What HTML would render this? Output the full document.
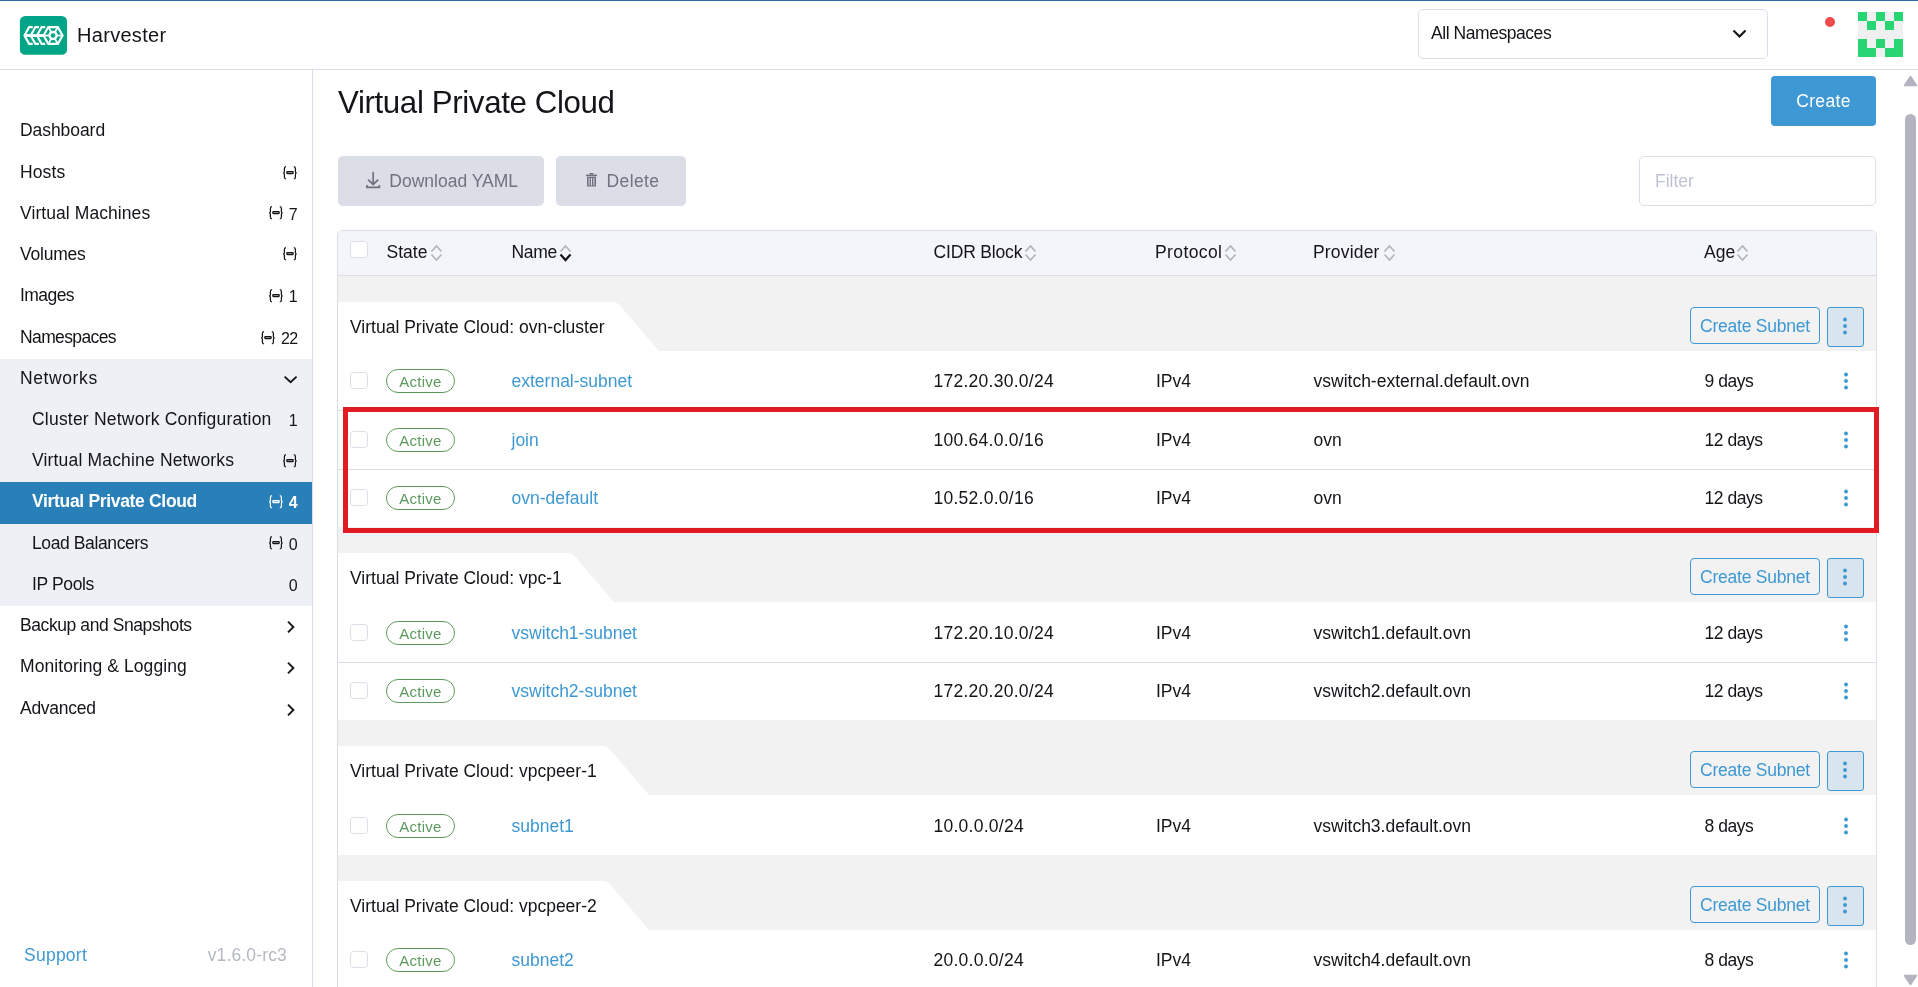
<!DOCTYPE html>
<html><head><meta charset="utf-8"><title>Harvester - Virtual Private Cloud</title>
<style>
html,body{margin:0;padding:0;width:1918px;height:987px;overflow:hidden;background:#fff;font-family:"Liberation Sans", sans-serif;}
.t{position:absolute;white-space:nowrap;line-height:1;}
#root{position:absolute;left:0;top:0;width:1918px;height:987px;will-change:transform;}
</style></head><body><div id="root">
<div style="position:absolute;left:0px;top:0px;width:1918px;height:1px;background:#336aa8"></div>
<div style="position:absolute;left:0px;top:69px;width:1918px;height:1px;background:#dcdee7"></div>
<svg style="position:absolute;left:18px;top:14px" width="52" height="44" viewBox="0 0 1166 987">
<rect x="42" y="45" width="1058" height="870" rx="120" fill="#00a587"/>
<g fill="none" stroke="#fff" stroke-linejoin="miter">
<polyline points="330,293 250,293 145,483 250,670 330,670" stroke-width="48"/>
<polyline points="470,293 390,293 285,483 390,670 470,670" stroke-width="48"/>
<polyline points="610,293 530,293 425,483 530,670 610,670" stroke-width="48"/>
<line x1="145" y1="483" x2="600" y2="483" stroke-width="64"/>
<polygon points="680,293 893,293 1000,483 893,670 680,670 573,483" stroke-width="48"/>
<line x1="680" y1="293" x2="893" y2="670" stroke-width="40"/>
<line x1="893" y1="293" x2="680" y2="670" stroke-width="40"/>
<line x1="573" y1="483" x2="1000" y2="483" stroke-width="40"/>
</g>
<circle cx="786" cy="483" r="106" fill="#fff"/>
<circle cx="786" cy="483" r="52" fill="#00a587"/>
</svg>
<div class="t" style="left:77px;top:25.00px;font-size:20px;color:#141419;font-weight:400;letter-spacing:0.3px;">Harvester</div>
<div style="position:absolute;left:1418px;top:9px;width:350px;height:50px;border:1px solid #dcdee7;border-radius:5px;box-sizing:border-box;background:#fff"></div>
<div class="t" style="left:1431px;top:25.20px;font-size:17.5px;color:#141419;font-weight:400;letter-spacing:-0.446px;">All Namespaces</div>
<svg style="position:absolute;left:1731px;top:28px" width="17" height="12" viewBox="0 0 17 12"><polyline points="2.5,2.5 8.5,8.5 14.5,2.5" fill="none" stroke="#141419" stroke-width="2.2"/></svg>
<div style="position:absolute;left:1825px;top:17px;width:10px;height:10px;border-radius:50%;background:#f04a4a"></div>
<svg style="position:absolute;left:1858px;top:12px" width="45" height="45" viewBox="0 0 45 45" shape-rendering="crispEdges"><rect x="0" y="0" width="9" height="9" fill="#27d673"/><rect x="9" y="0" width="9" height="9" fill="#f0f0f0"/><rect x="18" y="0" width="9" height="9" fill="#27d673"/><rect x="27" y="0" width="9" height="9" fill="#f0f0f0"/><rect x="36" y="0" width="9" height="9" fill="#27d673"/><rect x="0" y="9" width="9" height="9" fill="#f0f0f0"/><rect x="9" y="9" width="9" height="9" fill="#27d673"/><rect x="18" y="9" width="9" height="9" fill="#f0f0f0"/><rect x="27" y="9" width="9" height="9" fill="#27d673"/><rect x="36" y="9" width="9" height="9" fill="#f0f0f0"/><rect x="0" y="18" width="9" height="9" fill="#f0f0f0"/><rect x="9" y="18" width="9" height="9" fill="#f0f0f0"/><rect x="18" y="18" width="9" height="9" fill="#f0f0f0"/><rect x="27" y="18" width="9" height="9" fill="#f0f0f0"/><rect x="36" y="18" width="9" height="9" fill="#f0f0f0"/><rect x="0" y="27" width="9" height="9" fill="#27d673"/><rect x="9" y="27" width="9" height="9" fill="#f0f0f0"/><rect x="18" y="27" width="9" height="9" fill="#27d673"/><rect x="27" y="27" width="9" height="9" fill="#f0f0f0"/><rect x="36" y="27" width="9" height="9" fill="#27d673"/><rect x="0" y="36" width="9" height="9" fill="#27d673"/><rect x="9" y="36" width="9" height="9" fill="#27d673"/><rect x="18" y="36" width="9" height="9" fill="#f0f0f0"/><rect x="27" y="36" width="9" height="9" fill="#27d673"/><rect x="36" y="36" width="9" height="9" fill="#27d673"/></svg>
<div style="position:absolute;left:312px;top:70px;width:1px;height:917px;background:#dcdee7"></div>
<div style="position:absolute;left:0px;top:359px;width:312px;height:247px;background:#eef0f5"></div>
<div style="position:absolute;left:0px;top:482px;width:312px;height:42px;background:#2980b9"></div>
<div class="t" style="left:20px;top:122.00px;font-size:17.5px;color:#141419;font-weight:400;letter-spacing:-0.062px">Dashboard</div>
<div class="t" style="left:20px;top:164.00px;font-size:17.5px;color:#141419;font-weight:400;letter-spacing:0.125px">Hosts</div>
<svg width="15" height="14" viewBox="0 0 15 14" style="position:absolute;left:283.10px;top:165.70px"><path d="M3.0,0.7 C1.8,0.9 1.4,1.6 1.4,2.4 L1.4,5.4 C1.4,6.3 0.9,6.9 0.1,6.9 C0.9,6.9 1.4,7.5 1.4,8.4 L1.4,11.3 C1.4,12.1 1.8,12.8 3.0,13.0 M10.8,0.7 C12.0,0.9 12.4,1.6 12.4,2.4 L12.4,5.4 C12.4,6.3 12.9,6.9 13.7,6.9 C12.9,6.9 12.4,7.5 12.4,8.4 L12.4,11.3 C12.4,12.1 12.0,12.8 10.8,13.0" fill="none" stroke="#141419" stroke-width="1.25"/><rect x="3.85" y="5.75" width="6.3" height="1.8" rx="0.5" fill="none" stroke="#141419" stroke-width="1.3"/></svg>
<div class="t" style="left:20px;top:204.50px;font-size:17.5px;color:#141419;font-weight:400;letter-spacing:0.073px">Virtual Machines</div>
<div class="t" style="right:1620.4px;top:206.50px;font-size:16px;color:#141419;font-weight:400;">7</div>
<svg width="15" height="14" viewBox="0 0 15 14" style="position:absolute;left:269.00px;top:206.20px"><path d="M3.0,0.7 C1.8,0.9 1.4,1.6 1.4,2.4 L1.4,5.4 C1.4,6.3 0.9,6.9 0.1,6.9 C0.9,6.9 1.4,7.5 1.4,8.4 L1.4,11.3 C1.4,12.1 1.8,12.8 3.0,13.0 M10.8,0.7 C12.0,0.9 12.4,1.6 12.4,2.4 L12.4,5.4 C12.4,6.3 12.9,6.9 13.7,6.9 C12.9,6.9 12.4,7.5 12.4,8.4 L12.4,11.3 C12.4,12.1 12.0,12.8 10.8,13.0" fill="none" stroke="#141419" stroke-width="1.25"/><rect x="3.85" y="5.75" width="6.3" height="1.8" rx="0.5" fill="none" stroke="#141419" stroke-width="1.3"/></svg>
<div class="t" style="left:20px;top:245.75px;font-size:17.5px;color:#141419;font-weight:400;letter-spacing:-0.233px">Volumes</div>
<svg width="15" height="14" viewBox="0 0 15 14" style="position:absolute;left:283.10px;top:247.45px"><path d="M3.0,0.7 C1.8,0.9 1.4,1.6 1.4,2.4 L1.4,5.4 C1.4,6.3 0.9,6.9 0.1,6.9 C0.9,6.9 1.4,7.5 1.4,8.4 L1.4,11.3 C1.4,12.1 1.8,12.8 3.0,13.0 M10.8,0.7 C12.0,0.9 12.4,1.6 12.4,2.4 L12.4,5.4 C12.4,6.3 12.9,6.9 13.7,6.9 C12.9,6.9 12.4,7.5 12.4,8.4 L12.4,11.3 C12.4,12.1 12.0,12.8 10.8,13.0" fill="none" stroke="#141419" stroke-width="1.25"/><rect x="3.85" y="5.75" width="6.3" height="1.8" rx="0.5" fill="none" stroke="#141419" stroke-width="1.3"/></svg>
<div class="t" style="left:20px;top:287.00px;font-size:17.5px;color:#141419;font-weight:400;letter-spacing:-0.56px">Images</div>
<div class="t" style="right:1620.4px;top:289.00px;font-size:16px;color:#141419;font-weight:400;">1</div>
<svg width="15" height="14" viewBox="0 0 15 14" style="position:absolute;left:269.00px;top:288.70px"><path d="M3.0,0.7 C1.8,0.9 1.4,1.6 1.4,2.4 L1.4,5.4 C1.4,6.3 0.9,6.9 0.1,6.9 C0.9,6.9 1.4,7.5 1.4,8.4 L1.4,11.3 C1.4,12.1 1.8,12.8 3.0,13.0 M10.8,0.7 C12.0,0.9 12.4,1.6 12.4,2.4 L12.4,5.4 C12.4,6.3 12.9,6.9 13.7,6.9 C12.9,6.9 12.4,7.5 12.4,8.4 L12.4,11.3 C12.4,12.1 12.0,12.8 10.8,13.0" fill="none" stroke="#141419" stroke-width="1.25"/><rect x="3.85" y="5.75" width="6.3" height="1.8" rx="0.5" fill="none" stroke="#141419" stroke-width="1.3"/></svg>
<div class="t" style="left:20px;top:329.00px;font-size:17.5px;color:#141419;font-weight:400;letter-spacing:-0.622px">Namespaces</div>
<div class="t" style="right:1620.4px;top:331.00px;font-size:16px;color:#141419;font-weight:400;letter-spacing:-0.6px;">22</div>
<svg width="15" height="14" viewBox="0 0 15 14" style="position:absolute;left:260.80px;top:330.70px"><path d="M3.0,0.7 C1.8,0.9 1.4,1.6 1.4,2.4 L1.4,5.4 C1.4,6.3 0.9,6.9 0.1,6.9 C0.9,6.9 1.4,7.5 1.4,8.4 L1.4,11.3 C1.4,12.1 1.8,12.8 3.0,13.0 M10.8,0.7 C12.0,0.9 12.4,1.6 12.4,2.4 L12.4,5.4 C12.4,6.3 12.9,6.9 13.7,6.9 C12.9,6.9 12.4,7.5 12.4,8.4 L12.4,11.3 C12.4,12.1 12.0,12.8 10.8,13.0" fill="none" stroke="#141419" stroke-width="1.25"/><rect x="3.85" y="5.75" width="6.3" height="1.8" rx="0.5" fill="none" stroke="#141419" stroke-width="1.3"/></svg>
<div class="t" style="left:20px;top:369.50px;font-size:17.5px;color:#141419;font-weight:400;letter-spacing:0.6px">Networks</div>
<svg style="position:absolute;left:282px;top:370.5px" width="17" height="14" viewBox="0 0 17 14"><polyline points="2.6,5.6 8.6,11.1 14.6,5.6" fill="none" stroke="#141419" stroke-width="1.9"/></svg>
<div class="t" style="left:32px;top:410.75px;font-size:17.5px;color:#141419;font-weight:400;letter-spacing:0.211px">Cluster Network Configuration</div>
<div class="t" style="right:1620.4px;top:412.75px;font-size:16px;color:#141419;font-weight:400;">1</div>
<div class="t" style="left:32px;top:452.00px;font-size:17.5px;color:#141419;font-weight:400;letter-spacing:0.17px">Virtual Machine Networks</div>
<svg width="15" height="14" viewBox="0 0 15 14" style="position:absolute;left:283.10px;top:453.70px"><path d="M3.0,0.7 C1.8,0.9 1.4,1.6 1.4,2.4 L1.4,5.4 C1.4,6.3 0.9,6.9 0.1,6.9 C0.9,6.9 1.4,7.5 1.4,8.4 L1.4,11.3 C1.4,12.1 1.8,12.8 3.0,13.0 M10.8,0.7 C12.0,0.9 12.4,1.6 12.4,2.4 L12.4,5.4 C12.4,6.3 12.9,6.9 13.7,6.9 C12.9,6.9 12.4,7.5 12.4,8.4 L12.4,11.3 C12.4,12.1 12.0,12.8 10.8,13.0" fill="none" stroke="#141419" stroke-width="1.25"/><rect x="3.85" y="5.75" width="6.3" height="1.8" rx="0.5" fill="none" stroke="#141419" stroke-width="1.3"/></svg>
<div class="t" style="left:32px;top:493.25px;font-size:17.5px;color:#fff;font-weight:700;letter-spacing:-0.325px">Virtual Private Cloud</div>
<div class="t" style="right:1620.4px;top:495.25px;font-size:16px;color:#fff;font-weight:700;">4</div>
<svg width="15" height="14" viewBox="0 0 15 14" style="position:absolute;left:269.00px;top:494.95px"><path d="M3.0,0.7 C1.8,0.9 1.4,1.6 1.4,2.4 L1.4,5.4 C1.4,6.3 0.9,6.9 0.1,6.9 C0.9,6.9 1.4,7.5 1.4,8.4 L1.4,11.3 C1.4,12.1 1.8,12.8 3.0,13.0 M10.8,0.7 C12.0,0.9 12.4,1.6 12.4,2.4 L12.4,5.4 C12.4,6.3 12.9,6.9 13.7,6.9 C12.9,6.9 12.4,7.5 12.4,8.4 L12.4,11.3 C12.4,12.1 12.0,12.8 10.8,13.0" fill="none" stroke="#fff" stroke-width="1.25"/><rect x="3.85" y="5.75" width="6.3" height="1.8" rx="0.5" fill="none" stroke="#fff" stroke-width="1.3"/></svg>
<div class="t" style="left:32px;top:534.50px;font-size:17.5px;color:#141419;font-weight:400;letter-spacing:-0.392px">Load Balancers</div>
<div class="t" style="right:1620.4px;top:536.50px;font-size:16px;color:#141419;font-weight:400;">0</div>
<svg width="15" height="14" viewBox="0 0 15 14" style="position:absolute;left:269.00px;top:536.20px"><path d="M3.0,0.7 C1.8,0.9 1.4,1.6 1.4,2.4 L1.4,5.4 C1.4,6.3 0.9,6.9 0.1,6.9 C0.9,6.9 1.4,7.5 1.4,8.4 L1.4,11.3 C1.4,12.1 1.8,12.8 3.0,13.0 M10.8,0.7 C12.0,0.9 12.4,1.6 12.4,2.4 L12.4,5.4 C12.4,6.3 12.9,6.9 13.7,6.9 C12.9,6.9 12.4,7.5 12.4,8.4 L12.4,11.3 C12.4,12.1 12.0,12.8 10.8,13.0" fill="none" stroke="#141419" stroke-width="1.25"/><rect x="3.85" y="5.75" width="6.3" height="1.8" rx="0.5" fill="none" stroke="#141419" stroke-width="1.3"/></svg>
<div class="t" style="left:32px;top:575.75px;font-size:17.5px;color:#141419;font-weight:400;letter-spacing:-0.371px">IP Pools</div>
<div class="t" style="right:1620.4px;top:577.75px;font-size:16px;color:#141419;font-weight:400;">0</div>
<div class="t" style="left:20px;top:617.00px;font-size:17.5px;color:#141419;font-weight:400;letter-spacing:-0.416px">Backup and Snapshots</div>
<svg style="position:absolute;left:284px;top:618.0px" width="12" height="17" viewBox="0 0 12 17"><polyline points="4,3.6 9.4,9 4,14.4" fill="none" stroke="#141419" stroke-width="1.9"/></svg>
<div class="t" style="left:20px;top:658.25px;font-size:17.5px;color:#141419;font-weight:400;letter-spacing:0.068px">Monitoring &amp; Logging</div>
<svg style="position:absolute;left:284px;top:659.2px" width="12" height="17" viewBox="0 0 12 17"><polyline points="4,3.6 9.4,9 4,14.4" fill="none" stroke="#141419" stroke-width="1.9"/></svg>
<div class="t" style="left:20px;top:699.50px;font-size:17.5px;color:#141419;font-weight:400;letter-spacing:-0.271px">Advanced</div>
<svg style="position:absolute;left:284px;top:700.5px" width="12" height="17" viewBox="0 0 12 17"><polyline points="4,3.6 9.4,9 4,14.4" fill="none" stroke="#141419" stroke-width="1.9"/></svg>
<div class="t" style="left:24px;top:946.60px;font-size:17.5px;color:#3d98d3;font-weight:400;letter-spacing:0.25px;">Support</div>
<div class="t" style="right:1631px;top:946.60px;font-size:17.5px;color:#b6b8c3;font-weight:400;letter-spacing:0.156px;">v1.6.0-rc3</div>
<div class="t" style="left:338px;top:87.00px;font-size:31.25px;color:#141419;font-weight:400;letter-spacing:-0.365px;">Virtual Private Cloud</div>
<div style="position:absolute;left:1771px;top:76px;width:105px;height:50px;background:#3d98d3;border-radius:4px"></div>
<div class="t" style="left:1823.5px;transform:translateX(-50%);top:93.00px;font-size:17.5px;color:#fff;font-weight:400;letter-spacing:0.34px;">Create</div>
<div style="position:absolute;left:338px;top:156px;width:206px;height:50px;background:#dcdee7;border-radius:5px"></div>
<svg style="position:absolute;left:355px;top:165px" width="40" height="30" viewBox="0 0 1316 987"><g fill="none" stroke="#6e717c" stroke-width="56"><line x1="598" y1="225" x2="598" y2="625"/><polyline points="430,480 598,640 765,480" stroke-linejoin="miter"/><polyline points="393,660 393,737 803,737 803,660" stroke-linejoin="round"/></g></svg>
<div class="t" style="left:389.3px;top:173.10px;font-size:17.5px;color:#70737e;font-weight:400;">Download YAML</div>
<div style="position:absolute;left:556px;top:156px;width:130px;height:50px;background:#dcdee7;border-radius:5px"></div>
<svg style="position:absolute;left:585px;top:173px" width="13" height="14" viewBox="0 0 13 14"><g fill="#70737e"><rect x="1" y="1.6" width="11" height="1.6"/><rect x="4.5" y="0" width="4" height="1.6"/><path d="M2,3.8 H11 V13.4 H2 Z M3.6,5 V12.4 H4.6 V5 Z M6,5 V12.4 H7 V5 Z M8.4,5 V12.4 H9.4 V5 Z" fill-rule="evenodd"/></g></svg>
<div class="t" style="left:606.5px;top:173.10px;font-size:17.5px;color:#70737e;font-weight:400;letter-spacing:0.4px;">Delete</div>
<div style="position:absolute;left:1639px;top:156px;width:237px;height:50px;border:1px solid #dcdee7;border-radius:5px;box-sizing:border-box"></div>
<div class="t" style="left:1655px;top:173.30px;font-size:17.5px;color:#bec2d4;font-weight:400;">Filter</div>
<div style="position:absolute;left:337px;top:230px;width:1540px;height:800px;border:1px solid #dcdee7;border-radius:6px 6px 0 0;box-sizing:border-box"></div>
<div style="position:absolute;left:338px;top:231px;width:1538px;height:44px;background:#f4f5fa;border-radius:5px 5px 0 0"></div>
<div style="position:absolute;left:338px;top:275px;width:1538px;height:1px;background:#dcdee7"></div>
<div style="position:absolute;left:350.0px;top:241.25px;width:17.5px;height:16.5px;border:1.25px solid #dcdee7;border-radius:3.5px;box-sizing:border-box;background:#fff"></div>
<div class="t" style="left:386.5px;top:244.00px;font-size:17.5px;color:#141419;font-weight:400;">State</div>
<svg style="position:absolute;left:430px;top:244px" width="13" height="18" viewBox="0 0 13 18"><polyline points="1.5,7.5 6.5,2 11.5,7.5" fill="none" stroke="#b0b3bc" stroke-width="1.6"/><polyline points="1.5,10.5 6.5,16 11.5,10.5" fill="none" stroke="#b0b3bc" stroke-width="1.6"/></svg>
<div class="t" style="left:511.5px;top:244.00px;font-size:17.5px;color:#141419;font-weight:400;letter-spacing:-0.3px;">Name</div>
<svg style="position:absolute;left:559px;top:244px" width="13" height="18" viewBox="0 0 13 18"><polyline points="1.5,7.5 6.5,2 11.5,7.5" fill="none" stroke="#b0b3bc" stroke-width="1.6"/><polyline points="1.5,10.5 6.5,16 11.5,10.5" fill="none" stroke="#141419" stroke-width="2.2"/></svg>
<div class="t" style="left:933.5px;top:244.00px;font-size:17.5px;color:#141419;font-weight:400;letter-spacing:-0.167px;">CIDR Block</div>
<svg style="position:absolute;left:1024px;top:244px" width="13" height="18" viewBox="0 0 13 18"><polyline points="1.5,7.5 6.5,2 11.5,7.5" fill="none" stroke="#b0b3bc" stroke-width="1.6"/><polyline points="1.5,10.5 6.5,16 11.5,10.5" fill="none" stroke="#b0b3bc" stroke-width="1.6"/></svg>
<div class="t" style="left:1155px;top:244.00px;font-size:17.5px;color:#141419;font-weight:400;letter-spacing:0.386px;">Protocol</div>
<svg style="position:absolute;left:1224px;top:244px" width="13" height="18" viewBox="0 0 13 18"><polyline points="1.5,7.5 6.5,2 11.5,7.5" fill="none" stroke="#b0b3bc" stroke-width="1.6"/><polyline points="1.5,10.5 6.5,16 11.5,10.5" fill="none" stroke="#b0b3bc" stroke-width="1.6"/></svg>
<div class="t" style="left:1313px;top:244.00px;font-size:17.5px;color:#141419;font-weight:400;letter-spacing:0.171px;">Provider</div>
<svg style="position:absolute;left:1383px;top:244px" width="13" height="18" viewBox="0 0 13 18"><polyline points="1.5,7.5 6.5,2 11.5,7.5" fill="none" stroke="#b0b3bc" stroke-width="1.6"/><polyline points="1.5,10.5 6.5,16 11.5,10.5" fill="none" stroke="#b0b3bc" stroke-width="1.6"/></svg>
<div class="t" style="left:1704px;top:244.00px;font-size:17.5px;color:#141419;font-weight:400;">Age</div>
<svg style="position:absolute;left:1736px;top:244px" width="13" height="18" viewBox="0 0 13 18"><polyline points="1.5,7.5 6.5,2 11.5,7.5" fill="none" stroke="#b0b3bc" stroke-width="1.6"/><polyline points="1.5,10.5 6.5,16 11.5,10.5" fill="none" stroke="#b0b3bc" stroke-width="1.6"/></svg>
<div style="position:absolute;left:338px;top:276px;width:1538px;height:75px;background:#f2f2f2"></div>
<svg style="position:absolute;left:338px;top:302px" width="321" height="49" viewBox="0 0 321 49"><path d="M0,2 Q0,0 2,0 L276,0 Q279,0 282,3.5 L321,49 L0,49 Z" fill="#fff"/></svg>
<div class="t" style="left:350px;top:319.00px;font-size:17.5px;color:#141419;font-weight:400;">Virtual Private Cloud: ovn-cluster</div>
<div style="position:absolute;left:1690px;top:307.25px;width:130px;height:37px;border:1.25px solid #3d98d3;border-radius:4px;box-sizing:border-box"></div>
<div class="t" style="left:1755px;transform:translateX(-50%);top:317.80px;font-size:17.5px;color:#3d98d3;font-weight:400;letter-spacing:-0.217px;">Create Subnet</div>
<div style="position:absolute;left:1827px;top:307.25px;width:37px;height:39.5px;border:1.25px solid #3d98d3;border-radius:3px;box-sizing:border-box;background:#d8e5ef"></div>
<svg style="position:absolute;left:1841.40px;top:316.00px" width="8" height="20" viewBox="0 0 8 20"><g fill="#3d98d3"><circle cx="4" cy="3.5" r="1.95"/><circle cx="4" cy="10" r="1.95"/><circle cx="4" cy="16.5" r="1.95"/></g></svg>
<div style="position:absolute;left:350.0px;top:372.25px;width:17.5px;height:16.5px;border:1.25px solid #dcdee7;border-radius:3.5px;box-sizing:border-box;background:#fff"></div>
<div style="position:absolute;left:386px;top:368.50px;width:69px;height:24px;border:1.25px solid #5d995d;border-radius:12px;box-sizing:border-box"></div>
<div class="t" style="left:420.5px;transform:translateX(-50%);top:374.10px;font-size:15px;color:#5d995d;font-weight:400;letter-spacing:0.26px;">Active</div>
<div class="t" style="left:511.5px;top:373.00px;font-size:17.5px;color:#3d98d3;font-weight:400;">external-subnet</div>
<div class="t" style="left:933.5px;top:373.00px;font-size:17.5px;color:#141419;font-weight:400;letter-spacing:0.26px;">172.20.30.0/24</div>
<div class="t" style="left:1156px;top:373.00px;font-size:17.5px;color:#141419;font-weight:400;">IPv4</div>
<div class="t" style="left:1313.5px;top:373.00px;font-size:17.5px;color:#141419;font-weight:400;">vswitch-external.default.ovn</div>
<div class="t" style="left:1704.5px;top:373.00px;font-size:17.5px;color:#141419;font-weight:400;letter-spacing:-0.45px;">9 days</div>
<svg style="position:absolute;left:1842.30px;top:370.90px" width="8" height="20" viewBox="0 0 8 20"><g fill="#3d98d3"><circle cx="4" cy="3.5" r="1.95"/><circle cx="4" cy="10" r="1.95"/><circle cx="4" cy="16.5" r="1.95"/></g></svg>
<div style="position:absolute;left:338px;top:410px;width:1538px;height:1px;background:#dcdee7"></div>
<div style="position:absolute;left:350.0px;top:431.25px;width:17.5px;height:16.5px;border:1.25px solid #dcdee7;border-radius:3.5px;box-sizing:border-box;background:#fff"></div>
<div style="position:absolute;left:386px;top:427.50px;width:69px;height:24px;border:1.25px solid #5d995d;border-radius:12px;box-sizing:border-box"></div>
<div class="t" style="left:420.5px;transform:translateX(-50%);top:433.10px;font-size:15px;color:#5d995d;font-weight:400;letter-spacing:0.26px;">Active</div>
<div class="t" style="left:511.5px;top:432.00px;font-size:17.5px;color:#3d98d3;font-weight:400;">join</div>
<div class="t" style="left:933.5px;top:432.00px;font-size:17.5px;color:#141419;font-weight:400;letter-spacing:0.26px;">100.64.0.0/16</div>
<div class="t" style="left:1156px;top:432.00px;font-size:17.5px;color:#141419;font-weight:400;">IPv4</div>
<div class="t" style="left:1313.5px;top:432.00px;font-size:17.5px;color:#141419;font-weight:400;">ovn</div>
<div class="t" style="left:1704.5px;top:432.00px;font-size:17.5px;color:#141419;font-weight:400;letter-spacing:-0.45px;">12 days</div>
<svg style="position:absolute;left:1842.30px;top:429.90px" width="8" height="20" viewBox="0 0 8 20"><g fill="#3d98d3"><circle cx="4" cy="3.5" r="1.95"/><circle cx="4" cy="10" r="1.95"/><circle cx="4" cy="16.5" r="1.95"/></g></svg>
<div style="position:absolute;left:338px;top:469px;width:1538px;height:1px;background:#dcdee7"></div>
<div style="position:absolute;left:350.0px;top:489.25px;width:17.5px;height:16.5px;border:1.25px solid #dcdee7;border-radius:3.5px;box-sizing:border-box;background:#fff"></div>
<div style="position:absolute;left:386px;top:485.50px;width:69px;height:24px;border:1.25px solid #5d995d;border-radius:12px;box-sizing:border-box"></div>
<div class="t" style="left:420.5px;transform:translateX(-50%);top:491.10px;font-size:15px;color:#5d995d;font-weight:400;letter-spacing:0.26px;">Active</div>
<div class="t" style="left:511.5px;top:490.00px;font-size:17.5px;color:#3d98d3;font-weight:400;">ovn-default</div>
<div class="t" style="left:933.5px;top:490.00px;font-size:17.5px;color:#141419;font-weight:400;letter-spacing:0.26px;">10.52.0.0/16</div>
<div class="t" style="left:1156px;top:490.00px;font-size:17.5px;color:#141419;font-weight:400;">IPv4</div>
<div class="t" style="left:1313.5px;top:490.00px;font-size:17.5px;color:#141419;font-weight:400;">ovn</div>
<div class="t" style="left:1704.5px;top:490.00px;font-size:17.5px;color:#141419;font-weight:400;letter-spacing:-0.45px;">12 days</div>
<svg style="position:absolute;left:1842.30px;top:487.90px" width="8" height="20" viewBox="0 0 8 20"><g fill="#3d98d3"><circle cx="4" cy="3.5" r="1.95"/><circle cx="4" cy="10" r="1.95"/><circle cx="4" cy="16.5" r="1.95"/></g></svg>
<div style="position:absolute;left:338px;top:527px;width:1538px;height:75px;background:#f2f2f2"></div>
<svg style="position:absolute;left:338px;top:553px" width="276" height="49" viewBox="0 0 276 49"><path d="M0,2 Q0,0 2,0 L231,0 Q234,0 237,3.5 L276,49 L0,49 Z" fill="#fff"/></svg>
<div class="t" style="left:350px;top:570.00px;font-size:17.5px;color:#141419;font-weight:400;">Virtual Private Cloud: vpc-1</div>
<div style="position:absolute;left:1690px;top:558.25px;width:130px;height:37px;border:1.25px solid #3d98d3;border-radius:4px;box-sizing:border-box"></div>
<div class="t" style="left:1755px;transform:translateX(-50%);top:568.80px;font-size:17.5px;color:#3d98d3;font-weight:400;letter-spacing:-0.217px;">Create Subnet</div>
<div style="position:absolute;left:1827px;top:558.25px;width:37px;height:39.5px;border:1.25px solid #3d98d3;border-radius:3px;box-sizing:border-box;background:#d8e5ef"></div>
<svg style="position:absolute;left:1841.40px;top:567.00px" width="8" height="20" viewBox="0 0 8 20"><g fill="#3d98d3"><circle cx="4" cy="3.5" r="1.95"/><circle cx="4" cy="10" r="1.95"/><circle cx="4" cy="16.5" r="1.95"/></g></svg>
<div style="position:absolute;left:350.0px;top:624.25px;width:17.5px;height:16.5px;border:1.25px solid #dcdee7;border-radius:3.5px;box-sizing:border-box;background:#fff"></div>
<div style="position:absolute;left:386px;top:620.50px;width:69px;height:24px;border:1.25px solid #5d995d;border-radius:12px;box-sizing:border-box"></div>
<div class="t" style="left:420.5px;transform:translateX(-50%);top:626.10px;font-size:15px;color:#5d995d;font-weight:400;letter-spacing:0.26px;">Active</div>
<div class="t" style="left:511.5px;top:625.00px;font-size:17.5px;color:#3d98d3;font-weight:400;">vswitch1-subnet</div>
<div class="t" style="left:933.5px;top:625.00px;font-size:17.5px;color:#141419;font-weight:400;letter-spacing:0.26px;">172.20.10.0/24</div>
<div class="t" style="left:1156px;top:625.00px;font-size:17.5px;color:#141419;font-weight:400;">IPv4</div>
<div class="t" style="left:1313.5px;top:625.00px;font-size:17.5px;color:#141419;font-weight:400;">vswitch1.default.ovn</div>
<div class="t" style="left:1704.5px;top:625.00px;font-size:17.5px;color:#141419;font-weight:400;letter-spacing:-0.45px;">12 days</div>
<svg style="position:absolute;left:1842.30px;top:622.90px" width="8" height="20" viewBox="0 0 8 20"><g fill="#3d98d3"><circle cx="4" cy="3.5" r="1.95"/><circle cx="4" cy="10" r="1.95"/><circle cx="4" cy="16.5" r="1.95"/></g></svg>
<div style="position:absolute;left:338px;top:662px;width:1538px;height:1px;background:#dcdee7"></div>
<div style="position:absolute;left:350.0px;top:682.25px;width:17.5px;height:16.5px;border:1.25px solid #dcdee7;border-radius:3.5px;box-sizing:border-box;background:#fff"></div>
<div style="position:absolute;left:386px;top:678.50px;width:69px;height:24px;border:1.25px solid #5d995d;border-radius:12px;box-sizing:border-box"></div>
<div class="t" style="left:420.5px;transform:translateX(-50%);top:684.10px;font-size:15px;color:#5d995d;font-weight:400;letter-spacing:0.26px;">Active</div>
<div class="t" style="left:511.5px;top:683.00px;font-size:17.5px;color:#3d98d3;font-weight:400;">vswitch2-subnet</div>
<div class="t" style="left:933.5px;top:683.00px;font-size:17.5px;color:#141419;font-weight:400;letter-spacing:0.26px;">172.20.20.0/24</div>
<div class="t" style="left:1156px;top:683.00px;font-size:17.5px;color:#141419;font-weight:400;">IPv4</div>
<div class="t" style="left:1313.5px;top:683.00px;font-size:17.5px;color:#141419;font-weight:400;">vswitch2.default.ovn</div>
<div class="t" style="left:1704.5px;top:683.00px;font-size:17.5px;color:#141419;font-weight:400;letter-spacing:-0.45px;">12 days</div>
<svg style="position:absolute;left:1842.30px;top:680.90px" width="8" height="20" viewBox="0 0 8 20"><g fill="#3d98d3"><circle cx="4" cy="3.5" r="1.95"/><circle cx="4" cy="10" r="1.95"/><circle cx="4" cy="16.5" r="1.95"/></g></svg>
<div style="position:absolute;left:338px;top:720px;width:1538px;height:75px;background:#f2f2f2"></div>
<svg style="position:absolute;left:338px;top:746px" width="311" height="49" viewBox="0 0 311 49"><path d="M0,2 Q0,0 2,0 L266,0 Q269,0 272,3.5 L311,49 L0,49 Z" fill="#fff"/></svg>
<div class="t" style="left:350px;top:763.00px;font-size:17.5px;color:#141419;font-weight:400;">Virtual Private Cloud: vpcpeer-1</div>
<div style="position:absolute;left:1690px;top:751.25px;width:130px;height:37px;border:1.25px solid #3d98d3;border-radius:4px;box-sizing:border-box"></div>
<div class="t" style="left:1755px;transform:translateX(-50%);top:761.80px;font-size:17.5px;color:#3d98d3;font-weight:400;letter-spacing:-0.217px;">Create Subnet</div>
<div style="position:absolute;left:1827px;top:751.25px;width:37px;height:39.5px;border:1.25px solid #3d98d3;border-radius:3px;box-sizing:border-box;background:#d8e5ef"></div>
<svg style="position:absolute;left:1841.40px;top:760.00px" width="8" height="20" viewBox="0 0 8 20"><g fill="#3d98d3"><circle cx="4" cy="3.5" r="1.95"/><circle cx="4" cy="10" r="1.95"/><circle cx="4" cy="16.5" r="1.95"/></g></svg>
<div style="position:absolute;left:350.0px;top:817.25px;width:17.5px;height:16.5px;border:1.25px solid #dcdee7;border-radius:3.5px;box-sizing:border-box;background:#fff"></div>
<div style="position:absolute;left:386px;top:813.50px;width:69px;height:24px;border:1.25px solid #5d995d;border-radius:12px;box-sizing:border-box"></div>
<div class="t" style="left:420.5px;transform:translateX(-50%);top:819.10px;font-size:15px;color:#5d995d;font-weight:400;letter-spacing:0.26px;">Active</div>
<div class="t" style="left:511.5px;top:818.00px;font-size:17.5px;color:#3d98d3;font-weight:400;">subnet1</div>
<div class="t" style="left:933.5px;top:818.00px;font-size:17.5px;color:#141419;font-weight:400;letter-spacing:0.26px;">10.0.0.0/24</div>
<div class="t" style="left:1156px;top:818.00px;font-size:17.5px;color:#141419;font-weight:400;">IPv4</div>
<div class="t" style="left:1313.5px;top:818.00px;font-size:17.5px;color:#141419;font-weight:400;">vswitch3.default.ovn</div>
<div class="t" style="left:1704.5px;top:818.00px;font-size:17.5px;color:#141419;font-weight:400;letter-spacing:-0.45px;">8 days</div>
<svg style="position:absolute;left:1842.30px;top:815.90px" width="8" height="20" viewBox="0 0 8 20"><g fill="#3d98d3"><circle cx="4" cy="3.5" r="1.95"/><circle cx="4" cy="10" r="1.95"/><circle cx="4" cy="16.5" r="1.95"/></g></svg>
<div style="position:absolute;left:338px;top:855px;width:1538px;height:75px;background:#f2f2f2"></div>
<svg style="position:absolute;left:338px;top:881px" width="311" height="49" viewBox="0 0 311 49"><path d="M0,2 Q0,0 2,0 L266,0 Q269,0 272,3.5 L311,49 L0,49 Z" fill="#fff"/></svg>
<div class="t" style="left:350px;top:898.00px;font-size:17.5px;color:#141419;font-weight:400;">Virtual Private Cloud: vpcpeer-2</div>
<div style="position:absolute;left:1690px;top:886.25px;width:130px;height:37px;border:1.25px solid #3d98d3;border-radius:4px;box-sizing:border-box"></div>
<div class="t" style="left:1755px;transform:translateX(-50%);top:896.80px;font-size:17.5px;color:#3d98d3;font-weight:400;letter-spacing:-0.217px;">Create Subnet</div>
<div style="position:absolute;left:1827px;top:886.25px;width:37px;height:39.5px;border:1.25px solid #3d98d3;border-radius:3px;box-sizing:border-box;background:#d8e5ef"></div>
<svg style="position:absolute;left:1841.40px;top:895.00px" width="8" height="20" viewBox="0 0 8 20"><g fill="#3d98d3"><circle cx="4" cy="3.5" r="1.95"/><circle cx="4" cy="10" r="1.95"/><circle cx="4" cy="16.5" r="1.95"/></g></svg>
<div style="position:absolute;left:350.0px;top:951.25px;width:17.5px;height:16.5px;border:1.25px solid #dcdee7;border-radius:3.5px;box-sizing:border-box;background:#fff"></div>
<div style="position:absolute;left:386px;top:947.50px;width:69px;height:24px;border:1.25px solid #5d995d;border-radius:12px;box-sizing:border-box"></div>
<div class="t" style="left:420.5px;transform:translateX(-50%);top:953.10px;font-size:15px;color:#5d995d;font-weight:400;letter-spacing:0.26px;">Active</div>
<div class="t" style="left:511.5px;top:952.00px;font-size:17.5px;color:#3d98d3;font-weight:400;">subnet2</div>
<div class="t" style="left:933.5px;top:952.00px;font-size:17.5px;color:#141419;font-weight:400;letter-spacing:0.26px;">20.0.0.0/24</div>
<div class="t" style="left:1156px;top:952.00px;font-size:17.5px;color:#141419;font-weight:400;">IPv4</div>
<div class="t" style="left:1313.5px;top:952.00px;font-size:17.5px;color:#141419;font-weight:400;">vswitch4.default.ovn</div>
<div class="t" style="left:1704.5px;top:952.00px;font-size:17.5px;color:#141419;font-weight:400;letter-spacing:-0.45px;">8 days</div>
<svg style="position:absolute;left:1842.30px;top:949.90px" width="8" height="20" viewBox="0 0 8 20"><g fill="#3d98d3"><circle cx="4" cy="3.5" r="1.95"/><circle cx="4" cy="10" r="1.95"/><circle cx="4" cy="16.5" r="1.95"/></g></svg>
<div style="position:absolute;left:343px;top:407px;width:1536px;height:126px;border:5px solid #e11b22;box-sizing:border-box"></div>
<svg style="position:absolute;left:1903px;top:74px" width="15" height="14" viewBox="0 0 15 14"><path d="M1.5,11.5 L7.5,2.5 L13.5,11.5 Z" fill="#b4b4c0" stroke="#b4b4c0" stroke-width="1.5" stroke-linejoin="round"/></svg>
<div style="position:absolute;left:1905px;top:114px;width:11px;height:831px;background:#b4b4c0;border-radius:5.5px"></div>
<svg style="position:absolute;left:1903px;top:973px" width="15" height="14" viewBox="0 0 15 14"><path d="M1.5,2.5 L7.5,11.5 L13.5,2.5 Z" fill="#b4b4c0" stroke="#b4b4c0" stroke-width="1.5" stroke-linejoin="round"/></svg>
</div></body></html>
